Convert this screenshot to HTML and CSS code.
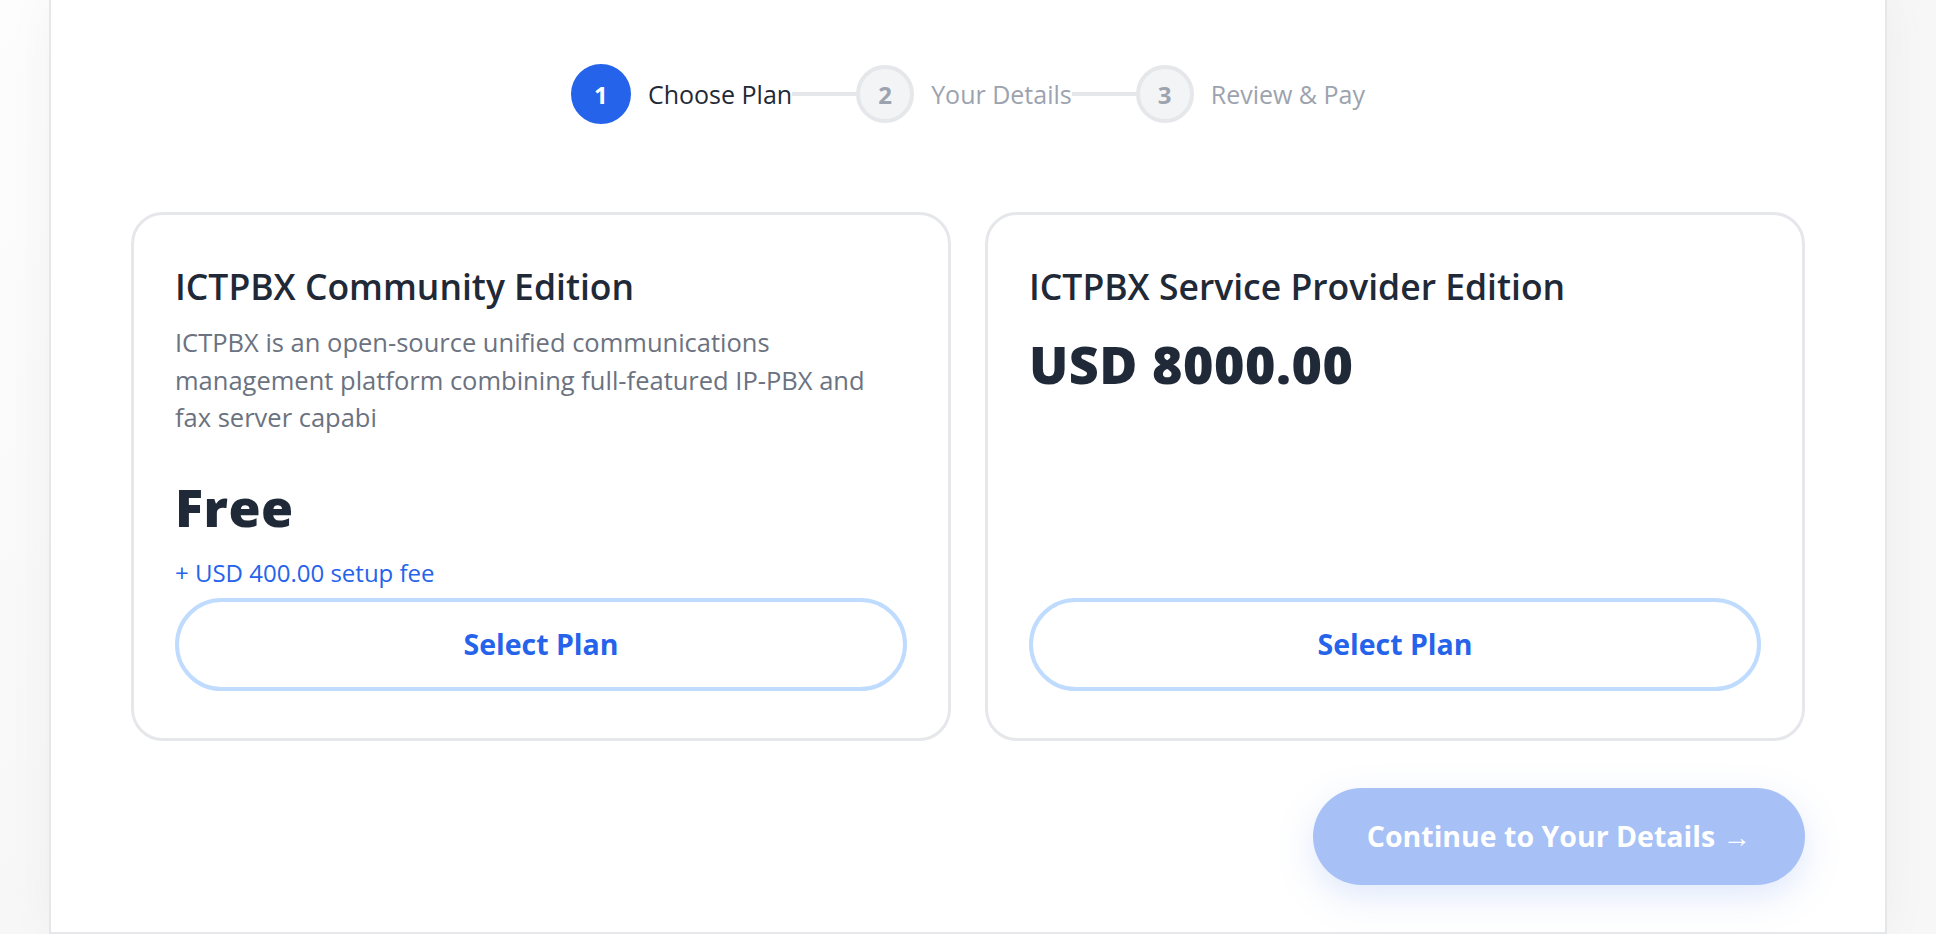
FILE: index.html
```html
<!DOCTYPE html>
<html lang="en">
<head>
<meta charset="utf-8">
<title>Choose Plan</title>
<link rel="stylesheet" href="styles.css">
</head>
<body>
<main class="panel">
  <nav class="stepper">
    <div class="step step-active">
      <span class="step-num">1</span>
      <span class="step-label">Choose Plan</span>
    </div>
    <span class="step-line"></span>
    <div class="step">
      <span class="step-num">2</span>
      <span class="step-label">Your Details</span>
    </div>
    <span class="step-line"></span>
    <div class="step">
      <span class="step-num">3</span>
      <span class="step-label">Review &amp; Pay</span>
    </div>
  </nav>

  <section class="plans">
    <article class="plan">
      <h2 class="plan-title">ICTPBX Community Edition</h2>
      <p class="plan-desc">ICTPBX is an open-source unified communications<br>management platform combining full-featured IP-PBX and<br>fax server capabi</p>
      <div class="plan-price">Free</div>
      <div class="plan-fee">+ USD 400.00 setup fee</div>
      <button class="plan-btn">Select Plan</button>
    </article>
    <article class="plan">
      <h2 class="plan-title">ICTPBX Service Provider Edition</h2>
      <div class="plan-price">USD 8000.00</div>
      <button class="plan-btn plan-btn-bottom">Select Plan</button>
    </article>
  </section>

  <div class="actions">
    <button class="continue-btn" disabled>Continue to Your Details →</button>
  </div>
</main>
</body>
</html>
```

FILE: styles.css
```css
* { box-sizing: border-box; }

html, body {
  margin: 0;
  padding: 0;
}

body {
  background: linear-gradient(135deg, #fdfdfd 0%, #f6f6f7 40%, #f7f7f8 100%);
  font-family: "Open Sans", "Noto Sans", "Liberation Sans", sans-serif;
  color: #1f2937;
  min-height: 100vh;
}

.panel {
  margin: 0 49px;
  min-height: 100vh;
  background: #ffffff;
  border: 2px solid #e5e7eb;
  border-top: 0;
  box-shadow: 0 0 48px rgba(0, 0, 0, 0.045);
  padding: 64px 80px 40px;
}

/* Stepper */
.stepper {
  display: flex;
  align-items: center;
  justify-content: center;
  margin-bottom: 88px;
  height: 60px;
}

.step {
  display: flex;
  align-items: center;
  gap: 17px;
}

.step-num {
  width: 58px;
  height: 58px;
  border-radius: 50%;
  border: 4px solid #e5e7eb;
  background: #f3f4f6;
  color: #9ca3af;
  font-size: 24px;
  font-weight: 700;
  display: flex;
  align-items: center;
  justify-content: center;
}

.step-active .step-num {
  width: 60px;
  height: 60px;
  background: #2563eb;
  border-color: #2563eb;
  color: #ffffff;
}

.step-label {
  font-size: 25px;
  font-weight: 500;
  color: #9ca3af;
  white-space: nowrap;
}

.step-active .step-label {
  color: #1f2937;
}

.step-line {
  width: 64px;
  height: 4px;
  background: #e5e7eb;
}

/* Plans */
.plans {
  display: grid;
  grid-template-columns: 1fr 1fr;
  gap: 34px;
}

.plan {
  display: flex;
  flex-direction: column;
  border: 3px solid #e5e7eb;
  border-radius: 32px;
  padding: 49px 41px 47px;
  background: #ffffff;
}

.plan-title {
  margin: 0 0 16px;
  font-size: 35.5px;
  font-weight: 600;
  line-height: 44px;
  color: #1f2937;
}

.plan-desc {
  margin: 0 0 30px;
  font-size: 25.5px;
  font-weight: 500;
  line-height: 37.5px;
  color: #6b7280;
}

.plan-price {
  margin-top: 10px;
  font-size: 52px;
  font-weight: 800;
  line-height: 60px;
  letter-spacing: 0.5px;
  color: #1f2937;
}

.plan-fee {
  margin-top: 19px;
  font-size: 24px;
  font-weight: 500;
  line-height: 33px;
  color: #2563eb;
}

.plan-btn {
  margin-top: 9px;
  height: 93px;
  width: 100%;
  border: 4px solid #bfdbfe;
  border-radius: 999px;
  background: #ffffff;
  color: #2563eb;
  font-family: inherit;
  font-size: 28.5px;
  font-weight: 700;
  cursor: pointer;
}

.plan-btn-bottom {
  margin-top: auto;
}

/* Actions */
.actions {
  display: flex;
  justify-content: flex-end;
  margin-top: 47px;
}

.continue-btn {
  height: 97px;
  padding: 0 54px;
  border: 0;
  border-radius: 999px;
  background: #2563eb;
  opacity: 0.4;
  color: #ffffff;
  font-family: inherit;
  font-size: 28.5px;
  font-weight: 700;
  box-shadow: 0 12px 32px rgba(37, 99, 235, 0.35);
}
```
